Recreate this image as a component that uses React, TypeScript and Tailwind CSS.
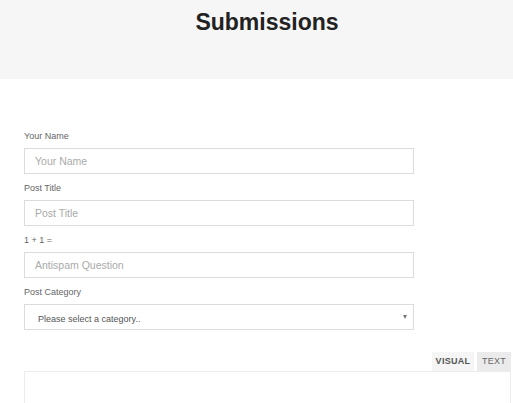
import { useState } from "react";

const font = { fontFamily: '"Liberation Sans", Arial, sans-serif' };

function Field({ label, placeholder }: { label: string; placeholder: string }) {
  return (
    <div className="mb-[8px]">
      <label className="block h-[12px] mb-[6px] text-[9px] leading-[12px] text-[#666]">{label}</label>
      <input
        type="text"
        placeholder={placeholder}
        className="block w-[390px] h-[26px] border border-[#dcdcdc] bg-white px-[10px] text-[10.5px] text-[#555] placeholder:text-[#aaa] outline-none"
      />
    </div>
  );
}

export default function App() {
  const [category, setCategory] = useState("");

  return (
    <div className="w-[513px] h-[403px] overflow-hidden bg-white" style={font}>
      <div className="h-[79px] bg-[#f6f6f6] pl-[21px] pt-[8px] text-center">
        <h1 className="text-[23px] font-bold leading-[28px] text-[#222]">Submissions</h1>
      </div>

      <div className="pl-[24px] pr-[2px] pt-[51px]">
        <Field label="Your Name" placeholder="Your Name" />
        <Field label="Post Title" placeholder="Post Title" />
        <Field label="1 + 1 =" placeholder="Antispam Question" />

        <div>
          <label className="block h-[12px] mb-[6px] text-[9px] leading-[12px] text-[#666]">Post Category</label>
          <div className="relative w-[390px] h-[26px] border border-[#dcdcdc] bg-white">
            <select
              value={category}
              onChange={(e) => setCategory(e.target.value)}
              className="w-full h-full appearance-none bg-transparent pl-[13px] text-[9px] text-[#555] outline-none"
            >
              <option value="">Please select a category..</option>
            </select>
            <span className="pointer-events-none absolute right-[6px] top-[10px] w-0 h-0 border-l-[2.5px] border-r-[2.5px] border-t-[4px] border-l-transparent border-r-transparent border-t-[#777]" />
          </div>
        </div>

        <div className="mt-[22px]">
          <div className="flex justify-end gap-[3px]">
            <button className="h-[19px] w-[42px] bg-[#f5f5f5] text-[9px] font-bold tracking-[0.3px] text-[#555]">VISUAL</button>
            <button className="h-[19px] w-[34px] bg-[#ebebeb] text-[9px] tracking-[0.3px] text-[#666]">TEXT</button>
          </div>
          <div className="h-[60px] border border-[#ececec] bg-white" />
        </div>
      </div>
    </div>
  );
}
